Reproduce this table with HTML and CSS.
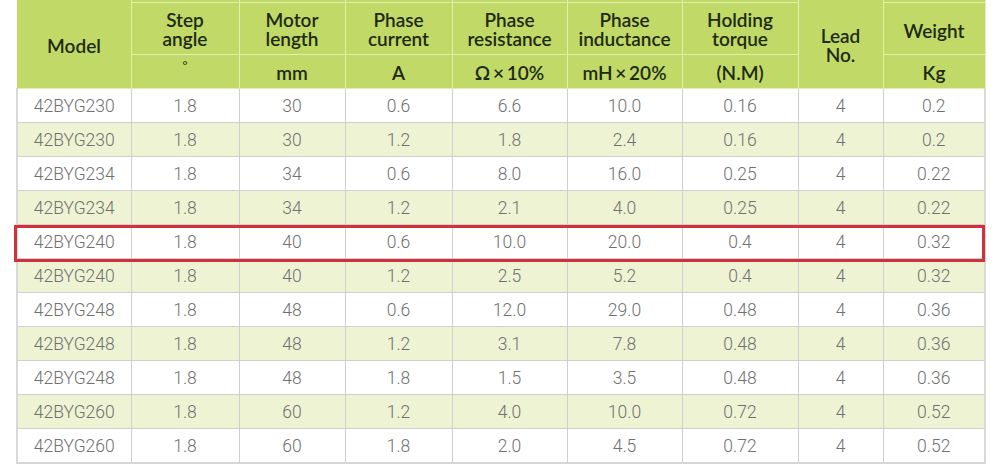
FILE: index.html
```html
<!DOCTYPE html>
<html>
<head>
<meta charset="utf-8">
<link rel="stylesheet" href="styles.css">
</head>
<body>
<div class="wrap">
<table class="spec">
  <colgroup>
    <col style="width:114px"><col style="width:108px"><col style="width:106px"><col style="width:107px"><col style="width:115px"><col style="width:115px"><col style="width:116px"><col style="width:85px"><col style="width:102px">
  </colgroup>
  <thead>
    <tr class="top">
      <th rowspan="3" class="model">Model</th>
      <th></th><th></th><th></th><th></th><th></th><th></th>
      <th rowspan="3" class="lead">Lead<br>No.</th>
      <th></th>
    </tr>
    <tr class="names">
      <th>Step<br>angle</th>
      <th>Motor<br>length</th>
      <th>Phase<br>current</th>
      <th>Phase<br>resistance</th>
      <th>Phase<br>inductance</th>
      <th>Holding<br>torque</th>
      <th class="single">Weight</th>
    </tr>
    <tr class="units">
      <th><span class="deg">°</span></th>
      <th>mm</th>
      <th>A</th>
      <th>Ω × 10%</th>
      <th>mH × 20%</th>
      <th>(N.M)</th>
      <th>Kg</th>
    </tr>
  </thead>
  <tbody>
    <tr><td>42BYG230</td><td>1.8</td><td>30</td><td>0.6</td><td>6.6</td><td>10.0</td><td>0.16</td><td>4</td><td>0.2</td></tr>
    <tr class="alt"><td>42BYG230</td><td>1.8</td><td>30</td><td>1.2</td><td>1.8</td><td>2.4</td><td>0.16</td><td>4</td><td>0.2</td></tr>
    <tr><td>42BYG234</td><td>1.8</td><td>34</td><td>0.6</td><td>8.0</td><td>16.0</td><td>0.25</td><td>4</td><td>0.22</td></tr>
    <tr class="alt"><td>42BYG234</td><td>1.8</td><td>34</td><td>1.2</td><td>2.1</td><td>4.0</td><td>0.25</td><td>4</td><td>0.22</td></tr>
    <tr><td>42BYG240</td><td>1.8</td><td>40</td><td>0.6</td><td>10.0</td><td>20.0</td><td>0.4</td><td>4</td><td>0.32</td></tr>
    <tr class="alt"><td>42BYG240</td><td>1.8</td><td>40</td><td>1.2</td><td>2.5</td><td>5.2</td><td>0.4</td><td>4</td><td>0.32</td></tr>
    <tr><td>42BYG248</td><td>1.8</td><td>48</td><td>0.6</td><td>12.0</td><td>29.0</td><td>0.48</td><td>4</td><td>0.36</td></tr>
    <tr class="alt"><td>42BYG248</td><td>1.8</td><td>48</td><td>1.2</td><td>3.1</td><td>7.8</td><td>0.48</td><td>4</td><td>0.36</td></tr>
    <tr><td>42BYG248</td><td>1.8</td><td>48</td><td>1.8</td><td>1.5</td><td>3.5</td><td>0.48</td><td>4</td><td>0.36</td></tr>
    <tr class="alt"><td>42BYG260</td><td>1.8</td><td>60</td><td>1.2</td><td>4.0</td><td>10.0</td><td>0.72</td><td>4</td><td>0.52</td></tr>
    <tr><td>42BYG260</td><td>1.8</td><td>60</td><td>1.8</td><td>2.0</td><td>4.5</td><td>0.72</td><td>4</td><td>0.52</td></tr>
  </tbody>
</table>
<div class="highlight"></div>
</div>
</body>
</html>
```

FILE: styles.css
```css
html, body {
  margin: 0;
  padding: 0;
  background: #ffffff;
}

.wrap {
  position: relative;
  width: 1000px;
  height: 470px;
  overflow: hidden;
}

.spec {
  margin-left: 16px;
  border-collapse: collapse;
  table-layout: fixed;
  width: 968px;
}

.spec th {
  background: #c0d967;
  color: #1f2a12;
  font-family: "Lato", "Liberation Sans", sans-serif;
  font-weight: 600;
  font-size: 19px;
  line-height: 19px;
  text-align: center;
  vertical-align: middle;
  padding: 0;
  border: 1px solid #e3efae;
}

.spec tr.top th {
  height: 2px;
  border-top: none;
}

.spec tr.top th:empty {
  font-size: 0;
  line-height: 0;
}

.spec th.model {
  border-left: 1px solid #c0d967;
  padding-top: 2px;
}

.spec th.lead {
  padding-top: 2px;
}

.spec tr.names th {
  height: 48px;
  padding-top: 1px;
}

.spec tr.names th.single {
  padding-top: 3px;
}

.spec tr.units th {
  height: 31px;
  padding-top: 2px;
  word-spacing: -2px;
}

.deg {
  display: inline-block;
  font-size: 12px;
  font-weight: 400;
  transform: translateY(-9px);
}

.spec td {
  height: 33px;
  padding: 0;
  text-align: center;
  vertical-align: middle;
  font-family: "Roboto", "Liberation Sans", sans-serif;
  font-weight: 300;
  font-size: 17.5px;
  color: #707070;
  border: 1px solid #cfcfcf;
  background: #ffffff;
}

.spec tr.alt td {
  background: #eef3d4;
}

.spec tbody tr:last-child td {
  border-bottom: 2px solid #d6d6d6;
}

.spec tbody td:first-child {
  border-left: 2px solid #d9d9d9;
}

.spec tbody td:last-child {
  border-right: 2px solid #d9d9d9;
}

.highlight {
  position: absolute;
  left: 14px;
  top: 225px;
  width: 965px;
  height: 31px;
  border: 3px solid #d2303a;
  pointer-events: none;
}
```
